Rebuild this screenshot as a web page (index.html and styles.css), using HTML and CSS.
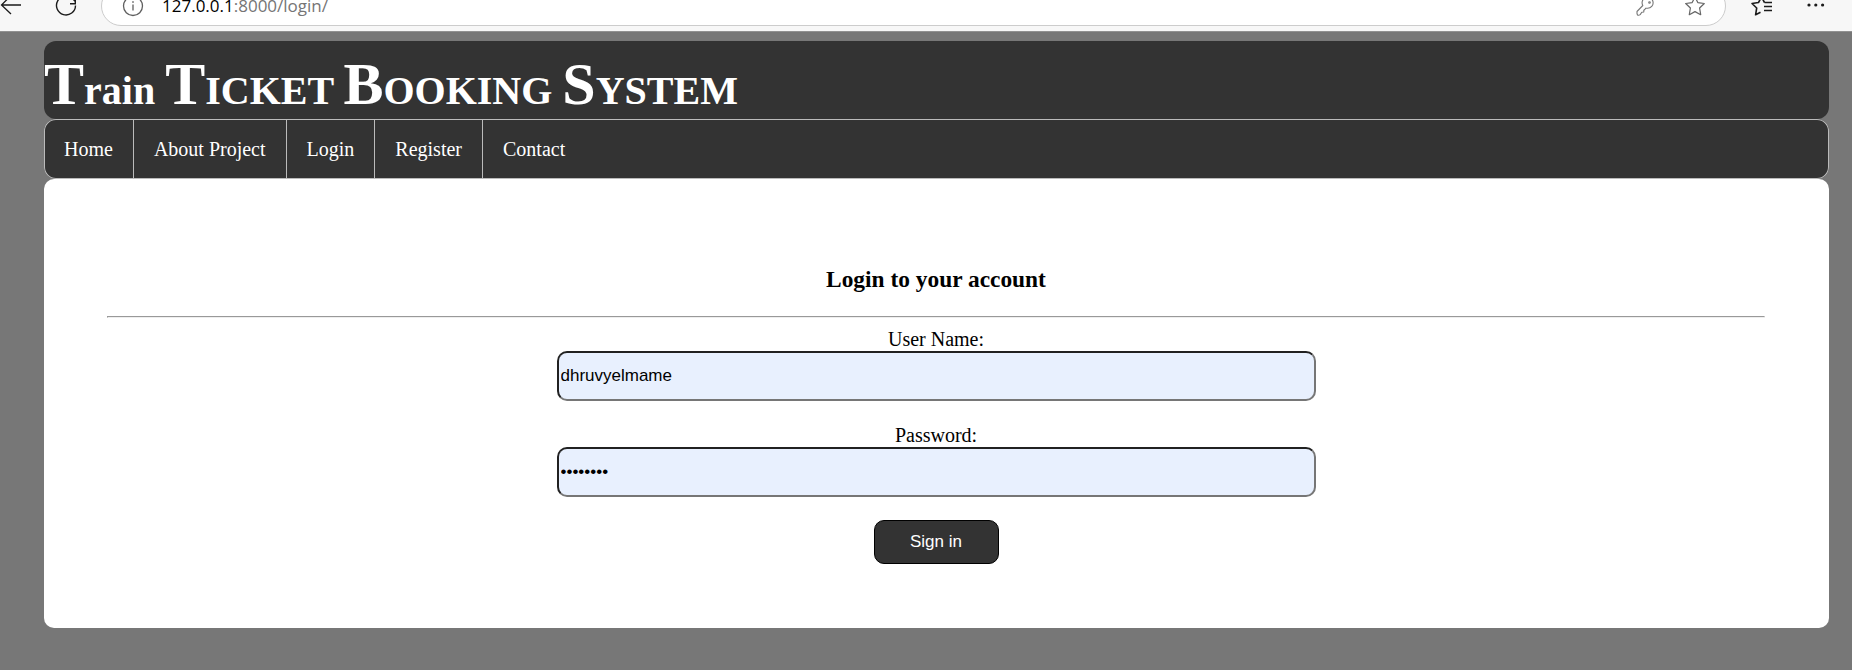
FILE: index.html
```html
<!DOCTYPE html>
<html lang="en">
<head>
<meta charset="utf-8">
<title>Train Ticket Booking System</title>
<link rel="stylesheet" href="styles.css">
</head>
<body>
<div class="browser-bar">
  <button class="tool back" type="button" aria-label="Back">
    <svg width="24" height="24" viewBox="0 0 24 24" fill="none" stroke="#1b1b1b" stroke-width="1.3"><path d="M21 11H2M11 1.500 1.500 11 11 20"/></svg>
  </button>
  <button class="tool refresh" type="button" aria-label="Refresh">
    <svg width="24" height="24" viewBox="0 0 24 24" fill="none" stroke="#1b1b1b" stroke-width="1.4"><path d="M21.500 11.500A9.500 9.500 0 1 1 18.800 4.800L21.300 7.500M21.300 2V9.800H16"/></svg>
  </button>
  <div class="address">
    <svg width="22" height="22" viewBox="0 0 22 22" fill="none" stroke="#5f5f5f" stroke-width="1.300"><circle cx="11" cy="11" r="9.500"/><path d="M11 9.500V15.500"/><circle cx="11" cy="7" r=".6" fill="#5f5f5f" stroke-width=".6"/></svg>
    <span class="url">127.0.0.1<span class="path">:8000/login/</span></span>
    <svg width="22" height="22" viewBox="0 0 22 22" fill="none" stroke="#777" stroke-width="1.100" stroke-linejoin="round"><path d="M8.800 10.500A5.500 5.500 0 1 1 13.500 13.300L11.800 13.200 10.800 14.500 9.800 15.300V17L7.800 17.300 6.200 19.600Q5 20.500 3.500 20L3 18.500V16.500Z"/><circle cx="15.500" cy="7.500" r=".8"/></svg>
    <svg class="favourite" width="22" height="22" viewBox="0 0 22 22" fill="none" stroke="#666" stroke-width="1.200" stroke-linejoin="round"><path d="M11 1.800 13.800 7.600 20.300 8.500 15.600 13 16.700 19.700 11 16.600 5.300 19.700 6.400 13 1.700 8.500 8.200 7.600Z"/></svg>
  </div>
  <button class="tool favourites" type="button" aria-label="Favourites">
    <svg width="24" height="24" viewBox="0 0 24 24" fill="none" stroke="#1b1b1b" stroke-width="1.600" stroke-linejoin="round"><path d="M14.500 8.500 11.500 3 8.500 8.500 2 9.500 6.700 14 5.600 20.800 10.500 18.300M14.500 8.500H22M14 12.500H22M14 16.500H22"/></svg>
  </button>
  <button class="tool more" type="button" aria-label="More">
    <svg width="24" height="24" viewBox="0 0 24 24" fill="#1b1b1b"><circle cx="5" cy="11" r="1.600"/><circle cx="11.800" cy="11" r="1.600"/><circle cx="18.600" cy="11" r="1.600"/></svg>
  </button>
</div>
<div class="page">
  <header class="banner">
    <h1 class="title"><span class="initial">T</span>rain <span class="initial">T</span>ICKET <span class="initial">B</span>OOKING <span class="initial">S</span>YSTEM</h1>
  </header>
  <nav class="menu">
    <a href="#home">Home</a>
    <a href="#about">About Project</a>
    <a href="#login">Login</a>
    <a href="#register">Register</a>
    <a href="#contact">Contact</a>
  </nav>
  <main class="panel">
    <h3 class="heading">Login to your account</h3>
    <hr class="rule">
    <form class="login">
      <div class="field">
        <label for="username">User Name:</label>
        <input id="username" type="text" value="dhruvyelmame">
      </div>
      <div class="field">
        <label for="password">Password:</label>
        <input id="password" type="password" value="password">
      </div>
      <button class="submit" type="button">Sign in</button>
    </form>
  </main>
</div>
</body>
</html>
```
FILE: styles.css
```css
* {
  box-sizing: border-box;
}

body {
  margin: 0;
  background: #777;
  color: #000;
  font-family: "Liberation Serif", "Times New Roman", serif;
  font-size: 20px;
}

.browser-bar {
  display: flex;
  align-items: flex-end;
  height: 32px;
  padding: 0 24px 5px 0;
  overflow: hidden;
  background: #f7f7f7;
  border-bottom: 1px solid #919191;
}

.tool {
  display: flex;
  align-items: center;
  flex: none;
  width: 24px;
  height: 40px;
  padding: 0;
  border: 0;
  background: none;
}

.refresh {
  margin: 0 23px 0 30px;
}

.favourites {
  margin: 0 30px 0 24px;
}

.address {
  display: flex;
  flex: 1;
  align-items: center;
  height: 40px;
  padding: 0 19px 0 20px;
  background: #fff;
  border: 1px solid #ccc;
  border-radius: 20px;
}

.favourite {
  margin-left: 28px;
}

.url {
  flex: 1;
  margin-left: 18px;
  font-family: "Open Sans", "Noto Sans", sans-serif;
  font-size: 17px;
  line-height: 20px;
}

.path {
  color: #757575;
}

.page {
  padding: 9px 23px 42px 44px;
}

.banner {
  padding-top: 9px;
  background: #333;
  border-radius: 12px;
}

.title {
  margin: 0;
  color: #fff;
  font-size: 40px;
}

.initial {
  font-size: 60px;
}

.menu {
  display: flex;
  height: 60px;
  background: #333;
  border-radius: 12px;
  box-shadow: inset 0 0 0 1px #bbb;
}

.menu a {
  display: flex;
  align-items: center;
  padding: 0 20px;
  border-right: 1px solid #bbb;
  color: #fff;
  text-decoration: none;
}

.menu a:last-child {
  border-right: 0;
}

.panel {
  padding: 64px 64px 64px 63px;
  background: #fff;
  border-radius: 10px;
  text-align: center;
}

.heading {
  margin: 23px 0;
}

.rule {
  margin: 0 0 10px;
  border: 1px solid;
  border-color: #999 #eee #eee #999;
}

.login {
  display: flex;
  flex-direction: column;
  align-items: center;
  gap: 23px;
}

.field {
  display: flex;
  flex-direction: column;
  align-items: center;
  width: 100%;
}

.field input {
  width: 759px;
  max-width: 100%;
  height: 50px;
  padding: 1px 2px;
  background: #e8f0fe;
  border: 2px solid;
  border-color: #212121 #767676 #767676 #212121;
  border-radius: 10px;
  color: #000;
  font-family: "Liberation Sans", Arial, sans-serif;
  font-size: 17px;
}

.submit {
  width: 125px;
  height: 44px;
  padding: 0;
  background: #333;
  border: 1px solid #000;
  border-radius: 10px;
  color: #fff;
  font-family: "Liberation Sans", Arial, sans-serif;
  font-size: 17px;
}
```
